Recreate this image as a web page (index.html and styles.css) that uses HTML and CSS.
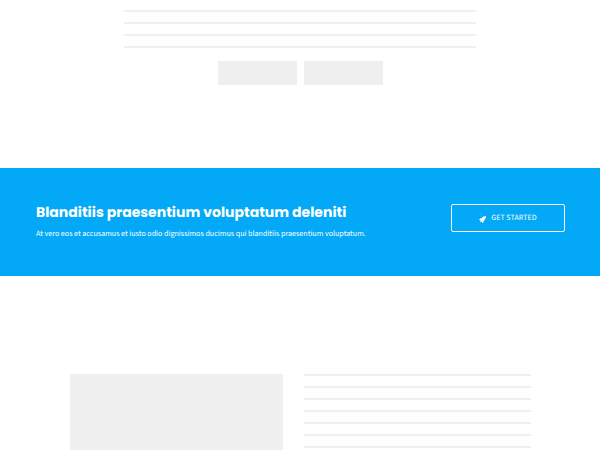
FILE: index.html
```html
<!DOCTYPE html>
<html lang="en">
<head>
<meta charset="utf-8">
<meta name="viewport" content="width=device-width, initial-scale=1">
<title>Get started</title>
<link rel="stylesheet" href="styles.css">
</head>
<body>
<section class="intro">
  <div class="lines">
    <div class="line"></div>
    <div class="line"></div>
    <div class="line"></div>
    <div class="line"></div>
  </div>
  <div class="blocks">
    <div class="block"></div>
    <div class="block"></div>
  </div>
</section>
<section class="cta">
  <div class="cta-text">
    <h2 class="cta-title">Blanditiis praesentium voluptatum deleniti</h2>
    <p class="cta-copy">At vero eos et accusamus et iusto odio dignissimos ducimus qui blanditiis praesentium voluptatum.</p>
  </div>
  <a class="cta-button" href="#start">
    <svg class="cta-icon" viewBox="0 0 16 16" aria-hidden="true">
      <path d="M16 0C11 0 8 2 6 5L2.500 5.500 0 9 4 9.500 2 13.500 3 14.500 6.500 12 7 16 10.500 13.500 11 10C14 8 16 5 16 0Z"/>
    </svg>
    <span>GET STARTED</span>
  </a>
</section>
<section class="feature">
  <div class="feature-media"></div>
  <div class="lines">
    <div class="line"></div>
    <div class="line"></div>
    <div class="line"></div>
    <div class="line"></div>
    <div class="line"></div>
    <div class="line"></div>
    <div class="line"></div>
  </div>
</section>
</body>
</html>
```
FILE: styles.css
```css
* {
  box-sizing: border-box;
}

body {
  margin: 0;
  background: #fff;
  color: #fff;
  font-family: "Source Sans Pro", "Source Sans 3", Lato, sans-serif;
  text-rendering: geometricPrecision;
}

.intro {
  padding: 10px 124px 83px;
}

.lines {
  display: grid;
  align-content: start;
  gap: 10px;
}

.line {
  height: 2px;
  background: #efefef;
}

.blocks {
  display: flex;
  justify-content: center;
  gap: 7px;
  margin-top: 13px;
}

.block {
  width: 79px;
  height: 24px;
  background: #efefef;
}

.cta {
  display: flex;
  align-items: flex-start;
  justify-content: space-between;
  padding: 32px 35px 30px 36px;
  background: #03a9f7;
}

.cta-title {
  margin: 0;
  font: 700 14px/24px Poppins, Inter, sans-serif;
}

.cta-copy {
  margin: 0;
  font-size: 8px;
  line-height: 22px;
}

.cta-button {
  display: flex;
  align-items: center;
  justify-content: center;
  gap: 5px;
  width: 114px;
  margin-top: 4px;
  padding: 7px 0 5px;
  border: 1px solid #fff;
  border-radius: 2px;
  color: #fff;
  font-size: 8px;
  line-height: 14px;
  text-decoration: none;
}

.cta-icon {
  width: 7px;
  height: 7px;
  fill: currentColor;
}

.feature {
  display: grid;
  grid-template-columns: 213fr 227fr;
  gap: 21px;
  padding: 98px 69px 0 70px;
}

.feature-media {
  min-height: 76px;
  background: #f0f0f0;
}
```
